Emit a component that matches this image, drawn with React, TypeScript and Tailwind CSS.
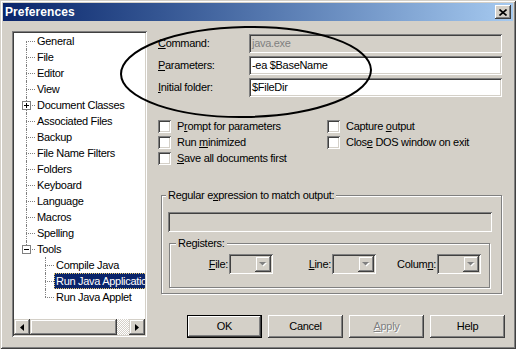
import React from 'react';

const raisedBtn =
  'shadow-[inset_-1px_-1px_0_#404040,inset_1px_1px_0_#fff,inset_-2px_-2px_0_#808080,inset_2px_2px_0_#d4d0c8]';
const raisedBar =
  'shadow-[inset_-1px_-1px_0_#404040,inset_1px_1px_0_#d4d0c8,inset_-2px_-2px_0_#808080,inset_2px_2px_0_#fff]';
const sunken =
  'shadow-[inset_1px_1px_0_#808080,inset_-1px_-1px_0_#fff,inset_2px_2px_0_#404040,inset_-2px_-2px_0_#d4d0c8]';

interface TreeItem {
  label: string;
  level: number;
  box?: 'plus' | 'minus';
  first?: boolean;
  last?: boolean;
  selected?: boolean;
}

const treeItems: TreeItem[] = [
  { label: 'General', level: 0, first: true },
  { label: 'File', level: 0 },
  { label: 'Editor', level: 0 },
  { label: 'View', level: 0 },
  { label: 'Document Classes', level: 0, box: 'plus' },
  { label: 'Associated Files', level: 0 },
  { label: 'Backup', level: 0 },
  { label: 'File Name Filters', level: 0 },
  { label: 'Folders', level: 0 },
  { label: 'Keyboard', level: 0 },
  { label: 'Language', level: 0 },
  { label: 'Macros', level: 0 },
  { label: 'Spelling', level: 0 },
  { label: 'Tools', level: 0, box: 'minus', last: true },
  { label: 'Compile Java', level: 1, first: true },
  { label: 'Run Java Application', level: 1, selected: true },
  { label: 'Run Java Applet', level: 1, last: true },
];

const Connector: React.FC<{ item: TreeItem }> = ({ item }) => (
  <div className="relative w-[19px] h-[16px] flex-shrink-0">
    {/* vertical line */}
    <span
      className={`absolute left-[10px] w-0 border-l border-dotted border-[#808080] ${
        item.level === 0 && item.first ? 'top-[8px] h-[8px]' : item.last ? 'top-0 h-[8px]' : 'top-0 h-[16px]'
      }`}
    />
    {/* horizontal line */}
    <span className="absolute left-[10px] top-[8px] w-[9px] h-0 border-t border-dotted border-[#808080]" />
    {item.box && (
      <span className="absolute left-[6px] top-[4px] w-[9px] h-[9px] border border-[#808080] bg-white">
        <span className="absolute left-[1px] top-[3px] w-[5px] h-[1px] bg-black" />
        {item.box === 'plus' && <span className="absolute left-[3px] top-[1px] w-[1px] h-[5px] bg-black" />}
      </span>
    )}
  </div>
);

const Tree: React.FC = () => (
  <div className={`w-[135px] h-[306px] bg-white p-[2px] flex flex-col flex-shrink-0 ${sunken}`}>
    <div className="flex-1 overflow-hidden pl-[2px]">
      {treeItems.map((item) => (
        <div key={item.label} className="flex h-[16px] items-center whitespace-nowrap">
          {item.level === 1 && <div className="w-[19px] flex-shrink-0" />}
          <Connector item={item} />
          <span
            className={`h-[16px] leading-[14px] px-[1px] border ${
              item.selected ? 'bg-[#0a246a] text-white border-dotted border-[#e8c86a]' : 'border-transparent'
            }`}
          >
            {item.label}
          </span>
        </div>
      ))}
    </div>
    <div className="h-[16px] flex">
      <div className={`w-[16px] h-[16px] bg-[#d4d0c8] flex items-center justify-center ${raisedBar}`}>
        <svg width="4" height="7" viewBox="0 0 4 7">
          <path d="M4 0V7L0 3.5Z" fill="#000" />
        </svg>
      </div>
      <div className={`w-[87px] h-[16px] bg-[#d4d0c8] ${raisedBar}`} />
      <div className="flex-1 bg-[repeating-conic-gradient(#d4d0c8_0_25%,#fff_0_50%)] bg-[length:2px_2px]" />
      <div className={`w-[16px] h-[16px] bg-[#d4d0c8] flex items-center justify-center ${raisedBar}`}>
        <svg width="4" height="7" viewBox="0 0 4 7">
          <path d="M0 0V7L4 3.5Z" fill="#000" />
        </svg>
      </div>
    </div>
  </div>
);

const Field: React.FC<{ label: React.ReactNode; value: string; disabled?: boolean }> = ({ label, value, disabled }) => (
  <div className="flex items-center h-[19px]">
    <div className="w-[91px]">{label}</div>
    <div
      className={`flex-1 h-[19px] flex items-center pl-[3px] ${sunken} ${
        disabled ? 'bg-[#d4d0c8] text-[#808080]' : 'bg-white text-black'
      }`}
    >
      {value}
    </div>
  </div>
);

const Check: React.FC<{ children: React.ReactNode }> = ({ children }) => (
  <div className="flex items-center h-[13px] gap-[6px]">
    <div className={`w-[13px] h-[13px] bg-white flex-shrink-0 ${sunken}`} />
    <span>{children}</span>
  </div>
);

const Combo: React.FC = () => (
  <div className={`w-[44px] h-[20px] flex-shrink-0 bg-[#d4d0c8] p-[2px] flex justify-end ${sunken}`}>
    <div className={`w-[16px] h-[16px] bg-[#d4d0c8] flex items-center justify-center ${raisedBar}`}>
      <svg width="8" height="5" viewBox="0 0 8 5">
        <path d="M1 1H8L4.5 4.5Z" fill="#fff" />
        <path d="M0 0H7L3.5 3.5Z" fill="#808080" />
      </svg>
    </div>
  </div>
);

const Button: React.FC<{ children: React.ReactNode; isDefault?: boolean; disabled?: boolean }> = ({
  children,
  isDefault,
  disabled,
}) => (
  <div
    className={`w-[75px] h-[23px] flex-shrink-0 bg-[#d4d0c8] flex items-center justify-center ${
      isDefault ? 'border border-black' : ''
    } ${raisedBtn} ${disabled ? 'text-[#808080] [text-shadow:1px_1px_0_#fff]' : ''}`}
  >
    {children}
  </div>
);

export default function App() {
  return (
    <div
      className="relative w-[516px] h-[349px] bg-[#d4d0c8] text-[11px] tracking-[-0.3px] text-black font-['Liberation_Sans',Arial,sans-serif] shadow-[inset_1px_1px_0_#d4d0c8,inset_-1px_-1px_0_#404040,inset_2px_2px_0_#fff,inset_-2px_-2px_0_#808080] p-[3px] flex flex-col overflow-hidden"
    >
      {/* Title bar */}
      <div className="h-[18px] flex items-center justify-between bg-linear-to-r from-[#0a246a] to-[#a6caf0] pl-[2px] pr-[2px]">
        <span className="text-white font-bold text-[12px] tracking-[0.1px]">Preferences</span>
        <div className={`w-[16px] h-[14px] bg-[#d4d0c8] flex items-center justify-center ${raisedBtn}`}>
          <svg width="8" height="7" viewBox="0 0 8 7">
            <path d="M0.5 0.5L7.5 6.5M7.5 0.5L0.5 6.5" stroke="#000" strokeWidth="1.6" />
          </svg>
        </div>
      </div>

      {/* Body */}
      <div className="flex pt-[10px] pl-[9px]">
        <Tree />

        <div className="ml-[11px] w-[344px] flex flex-col">
          <div className="mt-[3px] flex flex-col gap-[3px]">
            <Field
              label={
                <>
                  <u>C</u>ommand:
                </>
              }
              value="java.exe"
              disabled
            />
            <Field
              label={
                <>
                  <u>P</u>arameters:
                </>
              }
              value="-ea $BaseName"
            />
            <Field
              label={
                <>
                  <u>I</u>nitial folder:
                </>
              }
              value="$FileDir"
            />
          </div>

          <div className="mt-[23px] grid grid-cols-[169px_1fr] gap-y-[3px]">
            <Check>
              P<u>r</u>ompt for parameters
            </Check>
            <Check>
              Capture <u>o</u>utput
            </Check>
            <Check>
              Run <u>m</u>inimized
            </Check>
            <Check>
              Clos<u>e</u> DOS window on exit
            </Check>
            <Check>
              <u>S</u>ave all documents first
            </Check>
          </div>

          {/* Regular expression group */}
          <div className="mt-[30px] ml-[3px] w-[341px] h-[99px] border border-[#808080] shadow-[inset_1px_1px_0_#fff,1px_1px_0_#fff] flex flex-col">
            <span className="self-start -mt-[7px] ml-[4px] px-[2px] h-[13px] leading-[13px] bg-[#d4d0c8]">
              Regular e<u>x</u>pression to match output:
            </span>
            <div className={`mt-[10px] ml-[6px] w-[324px] h-[20px] bg-[#d4d0c8] ${sunken}`} />

            <div className="mt-[11px] ml-[7px] w-[321px] h-[45px] border border-[#808080] shadow-[inset_1px_1px_0_#fff,1px_1px_0_#fff] flex flex-col">
              <span className="self-start -mt-[7px] ml-[6px] px-[2px] h-[13px] leading-[13px] bg-[#d4d0c8]">
                Registers:
              </span>
              <div className="mt-[4px] flex items-center pl-[33px]">
                <span className="w-[26px] flex-shrink-0 whitespace-nowrap flex justify-end pr-[1px]">
                  <span>
                    <u>F</u>ile:
                  </span>
                </span>
                <Combo />
                <span className="ml-[34px] w-[25px] flex-shrink-0 whitespace-nowrap flex justify-end pr-[1px]">
                  <span>
                    <u>L</u>ine:
                  </span>
                </span>
                <Combo />
                <span className="ml-[22px] w-[39px] flex-shrink-0 whitespace-nowrap flex justify-end pr-[1px]">
                  <span>
                    Colum<u>n</u>:
                  </span>
                </span>
                <Combo />
              </div>
            </div>
          </div>

          {/* Buttons */}
          <div className="mt-[21px] pl-[29px] flex gap-[6px]">
            <Button isDefault>OK</Button>
            <Button>Cancel</Button>
            <Button disabled>
              <span>
                <u>A</u>pply
              </span>
            </Button>
            <Button>Help</Button>
          </div>
        </div>
      </div>

      {/* hand-drawn annotation ellipse */}
      <svg className="absolute inset-0 pointer-events-none" width="516" height="349" viewBox="0 0 516 349">
        <ellipse cx="246" cy="72" rx="125" ry="45" fill="none" stroke="#000" strokeWidth="2" transform="rotate(-1 246 72)" />
      </svg>
    </div>
  );
}
